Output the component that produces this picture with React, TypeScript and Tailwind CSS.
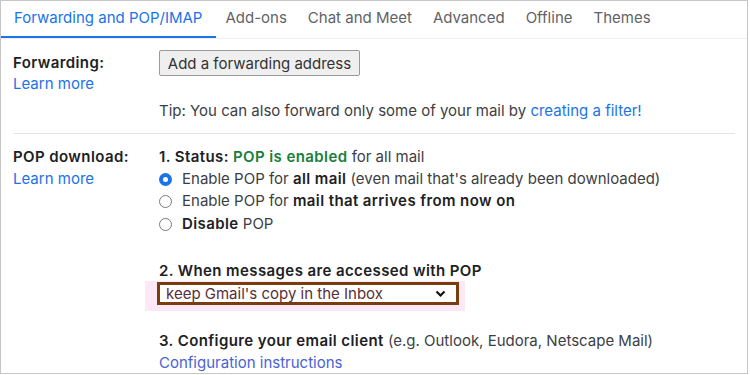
import React from "react";

const Radio = ({ checked }: { checked?: boolean }) =>
  checked ? (
    <span className="inline-flex w-[13px] h-[13px] rounded-full bg-[#1a73e8] items-center justify-center shrink-0">
      <span className="w-[5px] h-[5px] rounded-full bg-white" />
    </span>
  ) : (
    <span className="inline-block w-[13px] h-[13px] rounded-full border border-[#7a7a7a] bg-white shrink-0" />
  );

const B = ({ children, className = "text-[#202124]" }: { children: React.ReactNode; className?: string }) => (
  <span className={"font-semibold tracking-[0.4px] " + className}>{children}</span>
);

export default function App() {
  const tabs = ["Add-ons", "Chat and Meet", "Advanced", "Offline", "Themes"];
  return (
    <div
      className="w-[748px] h-[374px] bg-white border border-[#c6c6c6] overflow-hidden text-[15px] text-[#3c4043]"
      style={{ fontFamily: "Inter, Roboto, sans-serif" }}
    >
      {/* Tabs */}
      <div className="flex h-[38px] border-b border-[#efefef] text-[15px]">
        <div className="pl-[13px] pr-[14px] flex items-center h-full border-b-[2px] border-[#1a73e8] text-[#1a73e8] -mb-px">
          Forwarding and POP/IMAP
        </div>
        <div className="flex items-center gap-[21px] pl-[9px] text-[#5f6368] pb-[3px]">
          {tabs.map((t) => (
            <span key={t}>{t}</span>
          ))}
        </div>
      </div>

      {/* Forwarding */}
      <div className="mx-[12px] flex border-b border-[#e3e3e3] pb-[12px]">
        <div className="w-[146px] pt-[13px] leading-[21px]">
          <div className="font-semibold tracking-[0.4px] text-[#202124]">Forwarding:</div>
          <div className="text-[#1a73e8]">Learn more</div>
        </div>
        <div className="flex flex-col">
          <button className="mt-[11px] w-[201px] h-[26px] bg-[#efefef] border border-[#9a9a9a] rounded-[2px] text-[#333] text-[15px] leading-none">
            Add a forwarding address
          </button>
          <div className="mt-[25px] leading-[20px]">
            Tip: You can also forward only some of your mail by{" "}
            <span className="text-[#1a73e8]">creating a filter!</span>
          </div>
        </div>
      </div>

      {/* POP */}
      <div className="mx-[12px] flex">
        <div className="w-[146px] pt-[12px] leading-[22px]">
          <div className="font-semibold tracking-[0.4px] text-[#202124]">POP download:</div>
          <div className="text-[#1a73e8]">Learn more</div>
        </div>
        <div className="flex flex-col pt-[12px] leading-[22px]">
          <div>
            <B>1. Status: </B>
            <B className="text-[#188038]">POP is enabled</B> for all mail
          </div>
          <div className="flex items-center gap-[10px]">
            <Radio checked />
            <span>
              Enable POP for <B>all mail</B> (even mail that's already been downloaded)
            </span>
          </div>
          <div className="flex items-center gap-[10px]">
            <Radio />
            <span>
              Enable POP for <B>mail that arrives from now on</B>
            </span>
          </div>
          <div className="flex items-center gap-[10px] mt-[1px]">
            <Radio />
            <span>
              <B>Disable</B> POP
            </span>
          </div>

          <div className="mt-[25px]">
            <B>2. When messages are accessed with POP</B>
          </div>
          <div className="-ml-[14px] -mt-[1px] w-[320px] h-[30px] bg-[#fde8f6] pl-[12px] pt-[1px]">
            <div className="w-[302px] h-[23px] border-[3px] border-[#7a3d0f] bg-white flex items-center justify-between pl-[6px] pr-[10px] text-[#5a2e38] text-[15px]">
              <span>keep Gmail's copy in the Inbox</span>
              <svg width="11" height="8" viewBox="0 0 11 8">
                <path d="M1.5 1.5 L5.5 5.5 L9.5 1.5" fill="none" stroke="#111" strokeWidth="2.2" />
              </svg>
            </div>
          </div>

          <div className="mt-[19px]">
            <B>3. Configure your email client</B> (e.g. Outlook, Eudora, Netscape Mail)
          </div>
          <div className="text-[#4a62d6]">Configuration instructions</div>
        </div>
      </div>
    </div>
  );
}
